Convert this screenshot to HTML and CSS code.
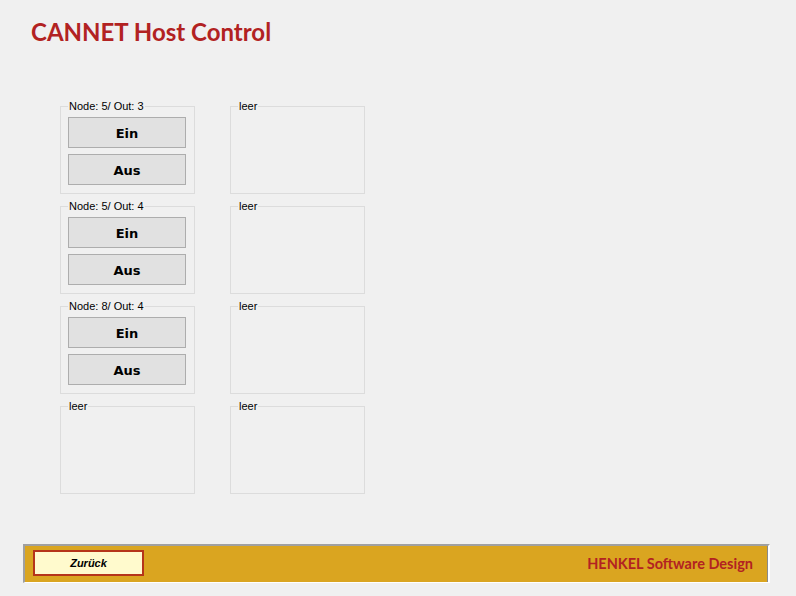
FILE: index.html
```html
<!DOCTYPE html>
<html>
<head>
<meta charset="utf-8">
<link rel="stylesheet" href="styles.css">
</head>
<body>
<div class="page">
  <h1 class="title">CANNET Host Control</h1>
  <div class="grid">
    <fieldset class="group">
      <legend>Node: 5/ Out: 3</legend>
      <button class="btn">Ein</button>
      <button class="btn">Aus</button>
    </fieldset>
    <fieldset class="group"><legend>leer</legend></fieldset>
    <fieldset class="group">
      <legend>Node: 5/ Out: 4</legend>
      <button class="btn">Ein</button>
      <button class="btn">Aus</button>
    </fieldset>
    <fieldset class="group"><legend>leer</legend></fieldset>
    <fieldset class="group">
      <legend>Node: 8/ Out: 4</legend>
      <button class="btn">Ein</button>
      <button class="btn">Aus</button>
    </fieldset>
    <fieldset class="group"><legend>leer</legend></fieldset>
    <fieldset class="group"><legend>leer</legend></fieldset>
    <fieldset class="group"><legend>leer</legend></fieldset>
  </div>
  <div class="footer">
    <button class="back">Zurück</button>
    <span class="brand">HENKEL Software Design</span>
  </div>
</div>
</body>
</html>
```
FILE: styles.css
```css
html, body {
  margin: 0;
  padding: 0;
  background: #f0f0f0;
}
.page {
  width: 796px;
  height: 596px;
  display: flex;
  flex-direction: column;
  font-family: "Liberation Sans", Arial, sans-serif;
}
.title {
  margin: 0;
  padding: 17px 0 0 31px;
  font-family: Lato, "Open Sans", sans-serif;
  font-weight: bold;
  font-size: 24px;
  line-height: 30px;
  color: #b22222;
}
.grid {
  margin: 53px 0 0 60px;
  display: grid;
  grid-template-columns: 135px 135px;
  grid-template-rows: repeat(4, 94px);
  column-gap: 35px;
  row-gap: 6px;
}
.group {
  margin: 0;
  padding: 0 0 0 7px;
  border: 1px solid #dcdcdc;
  min-width: 0;
  display: flex;
  flex-direction: column;
  gap: 6px;
}
.group legend {
  margin-left: 0;
  padding: 0 1px;
  font-size: 11px;
  line-height: 13px;
  color: #000;
}
.btn {
  width: 118px;
  height: 31px;
  margin: 4px 0 0 0;
  padding: 0;
  background: #e1e1e1;
  border: 1px solid #adadad;
  font-family: "DejaVu Sans", Verdana, sans-serif;
  font-weight: bold;
  font-size: 13px;
  line-height: 15px;
  padding-top: 1px;
  color: #000;
}
.btn + .btn {
  margin-top: 0;
}
.footer {
  margin: 50px 26px 0 23px;
  height: 39px;
  box-sizing: border-box;
  background: #daa520;
  border-top: 2px solid #a0a0a0;
  border-left: 2px solid #a0a0a0;
  border-right: 2px solid #ffffff;
  border-bottom: 1px solid #ffffff;
  box-shadow: inset -1px 0 0 #8a8a8a;
  display: flex;
  align-items: center;
  justify-content: space-between;
  padding: 0 15px 2px 8px;
}
.back {
  width: 111px;
  height: 26px;
  margin: 0;
  padding: 0;
  background: #fffacd;
  border: 2px solid #b5341a;
  font-family: "Liberation Sans", Arial, sans-serif;
  font-weight: bold;
  font-style: italic;
  font-size: 11px;
  color: #000;
}
.brand {
  font-family: Lato, "Open Sans", sans-serif;
  font-weight: bold;
  font-size: 14.5px;
  color: #b22222;
}
```
